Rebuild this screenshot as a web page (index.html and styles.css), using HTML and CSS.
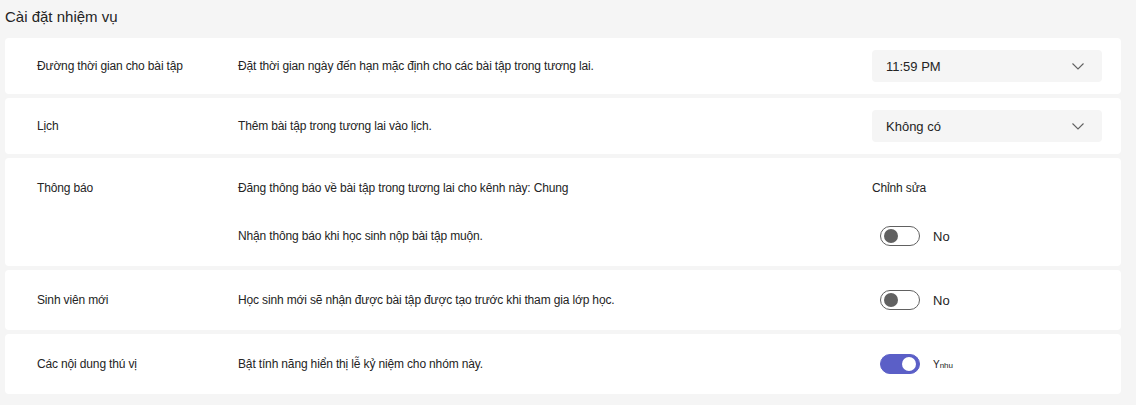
FILE: index.html
```html
<!DOCTYPE html>
<html lang="vi">
  <head>
    <meta charset="UTF-8" />
    <meta name="viewport" content="width=device-width, initial-scale=1.0" />
    <title>Cài đặt nhiệm vụ</title>
    <link rel="stylesheet" href="styles.css">
  </head>
  <body>
    <h1 class="page-title">Cài đặt nhiệm vụ</h1>

    <div class="settings">
      <div class="card">
        <div class="label">Đường thời gian cho bài tập</div>
        <div class="desc">Đặt thời gian ngày đến hạn mặc định cho các bài tập trong tương lai.</div>
        <div class="dropdown">
          <span>11:59 PM</span>
          <svg class="chevron" width="14" height="14" viewBox="0 0 14 14">
            <path d="M1.5 4.5 L7 10 L12.5 4.5" fill="none" stroke="#616161" stroke-width="1.1" />
          </svg>
        </div>
      </div>

      <div class="card">
        <div class="label">Lịch</div>
        <div class="desc">Thêm bài tập trong tương lai vào lịch.</div>
        <div class="dropdown">
          <span>Không có</span>
          <svg class="chevron" width="14" height="14" viewBox="0 0 14 14">
            <path d="M1.5 4.5 L7 10 L12.5 4.5" fill="none" stroke="#616161" stroke-width="1.1" />
          </svg>
        </div>
      </div>

      <div class="card card-tall">
        <div class="label">Thông báo</div>
        <div class="desc">Đăng thông báo về bài tập trong tương lai cho kênh này: Chung</div>
        <div class="control"><span class="link">Chỉnh sửa</span></div>
        <div class="label"></div>
        <div class="desc">Nhận thông báo khi học sinh nộp bài tập muộn.</div>
        <div class="control">
          <span class="toggle"></span>
          <span class="toggle-text">No</span>
        </div>
      </div>

      <div class="card card-toggle">
        <div class="label">Sinh viên mới</div>
        <div class="desc">Học sinh mới sẽ nhận được bài tập được tạo trước khi tham gia lớp học.</div>
        <div class="control">
          <span class="toggle"></span>
          <span class="toggle-text">No</span>
        </div>
      </div>

      <div class="card card-toggle">
        <div class="label">Các nội dung thú vị</div>
        <div class="desc">Bật tính năng hiển thị lễ kỷ niệm cho nhóm này.</div>
        <div class="control">
          <span class="toggle on"></span>
          <span class="toggle-text small">Y<small>nhu</small></span>
        </div>
      </div>
    </div>
  </body>
</html>
```

FILE: styles.css
```css
body {
  margin: 0;
  padding: 0 15px 0 5px;
  background: #f5f5f5;
  font-family: "Liberation Sans", Arial, sans-serif;
  color: #242424;
}

.page-title {
  margin: 0;
  padding: 7px 0 12px;
  font-size: 15px;
  font-weight: normal;
  line-height: 19px;
}

.settings {
  display: flex;
  flex-direction: column;
  gap: 4px;
}

.card {
  display: grid;
  grid-template-columns: 201px 1fr 230px;
  align-items: center;
  padding: 12px 19px 12px 32px;
  background: #fff;
  border-radius: 4px;
  font-size: 12px;
  letter-spacing: -0.15px;
}

.card-tall {
  padding: 18px 19px 18px 32px;
  row-gap: 24px;
}

.card-toggle {
  padding: 18px 19px 18px 32px;
}

.card-tall > div,
.card-toggle > div {
  height: 24px;
  display: flex;
  align-items: center;
}

.dropdown {
  display: flex;
  align-items: center;
  justify-content: space-between;
  height: 32px;
  padding: 0 14px;
  background: #f5f5f5;
  border-radius: 4px;
  font-size: 13px;
  letter-spacing: 0;
}

.chevron {
  margin-right: 3px;
}

.link {
  font-size: 12px;
}

.toggle {
  position: relative;
  box-sizing: border-box;
  width: 40px;
  height: 20px;
  margin-left: 8px;
  border: 1px solid #616161;
  border-radius: 10px;
  background: #fff;
}

.toggle::after {
  content: "";
  position: absolute;
  top: 2px;
  left: 3px;
  width: 14px;
  height: 14px;
  border-radius: 50%;
  background: #616161;
}

.toggle.on {
  border-color: #5b5fc7;
  background: #5b5fc7;
}

.toggle.on::after {
  left: auto;
  right: 3px;
  background: #fff;
}

.toggle-text {
  margin-left: 13px;
  font-size: 13px;
  letter-spacing: 0;
}

.toggle-text.small {
  font-size: 10px;
}

.toggle-text small {
  font-size: 8px;
}
```
